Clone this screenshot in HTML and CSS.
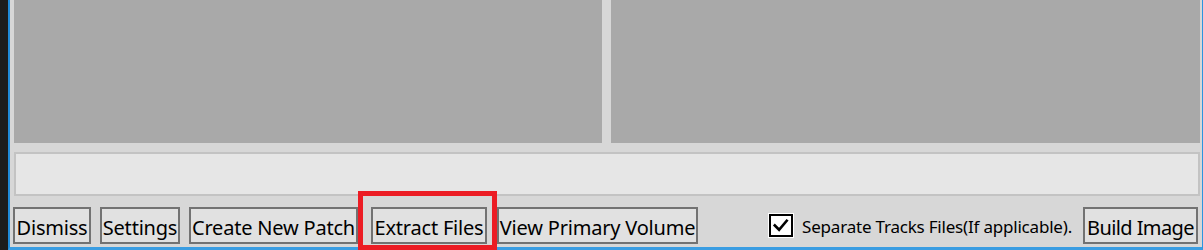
FILE: index.html
```html
<!DOCTYPE html>
<html>
<head>
<meta charset="utf-8">
<link rel="stylesheet" href="styles.css">
</head>
<body>
<div class="desktop-edge"></div>
<div class="window">
  <div class="panels">
    <div class="panel"></div>
    <div class="panel"></div>
  </div>
  <div class="textbox"></div>
  <div class="actions">
    <button class="btn btn-dismiss">Dismiss</button>
    <button class="btn btn-settings">Settings</button>
    <button class="btn btn-patch">Create New Patch</button>
    <div class="highlight-wrap">
      <button class="btn btn-extract">Extract Files</button>
      <span class="highlight"></span>
    </div>
    <button class="btn btn-view">View Primary Volume</button>
    <label class="check">
      <span class="check-box">
        <svg width="20" height="20" viewBox="0 0 20 20"><path d="M3.5 10 L8 14.5 L16 5" fill="none" stroke="#000" stroke-width="2.8" stroke-linecap="square"/></svg>
      </span>
      <span class="check-label">Separate Tracks Files(If applicable).</span>
    </label>
    <button class="btn btn-build">Build Image</button>
  </div>
</div>
</body>
</html>
```
FILE: styles.css
```css
html, body {
  margin: 0;
  padding: 0;
  height: 250px;
  overflow: hidden;
}
body {
  display: flex;
  background: #1c1c1c;
  font-family: "Noto Sans", "Open Sans", sans-serif;
}
.desktop-edge {
  width: 8px;
  flex: none;
}
.window {
  flex: 1;
  display: flex;
  flex-direction: column;
  background: #d7d7d7;
  border-left: 2px solid #1f8ad8;
  border-right: 1px solid #2b95e0;
  border-bottom: 3px solid #3a9de2;
  padding: 0 2px 0 4px;
  height: 247px;
}
.panels {
  display: grid;
  grid-template-columns: 588px 589px;
  column-gap: 9px;
  height: 143px;
  flex: none;
}
.panel {
  background: #a9a9a9;
}
.textbox {
  margin-top: 9px;
  height: 40px;
  background: #e6e6e6;
  border: 2px solid #c3c3c3;
  flex: none;
}
.actions {
  margin-top: 11px;
  margin-left: -1px;
  margin-right: 2px;
  display: flex;
  align-items: center;
  height: 37px;
}
.btn {
  height: 37px;
  box-sizing: border-box;
  border: 2px solid #727272;
  background: #e1e1e1;
  color: #000;
  font-family: "Noto Sans", "Open Sans", sans-serif;
  font-size: 20px;
  line-height: 27px;
  padding: 3px 0 0;
  margin: 0;
  white-space: nowrap;
  text-align: center;
  letter-spacing: -0.2px;
  overflow: hidden;
}
.btn-dismiss { width: 78px; }
.btn-settings { width: 80px; margin-left: 9px; }
.btn-patch { width: 169px; margin-left: 9px; }
.highlight-wrap {
  position: relative;
  margin-left: 13px;
  display: flex;
}
.btn-extract { width: 116px; }
.highlight {
  position: absolute;
  left: -13px;
  right: -10px;
  top: -16px;
  bottom: -6px;
  border: 5px solid #ec1c24;
  z-index: 2;
}
.btn-view { width: 201px; margin-left: 10px; }
.check {
  margin-left: auto;
  display: flex;
  align-items: center;
  margin-right: 11px;
}
.check-box {
  width: 26px;
  height: 25px;
  box-sizing: border-box;
  background: #fff;
  padding: 1px;
  display: flex;
}
.check-box svg {
  box-sizing: border-box;
  width: 24px;
  height: 23px;
  border: 2px solid #000;
  background: #fff;
}
.check-label {
  margin-left: 8px;
  font-size: 17px;
  color: #000;
  letter-spacing: -0.2px;
  padding-top: 1px;
}
.btn-build { width: 115px; letter-spacing: -0.6px; }
```
